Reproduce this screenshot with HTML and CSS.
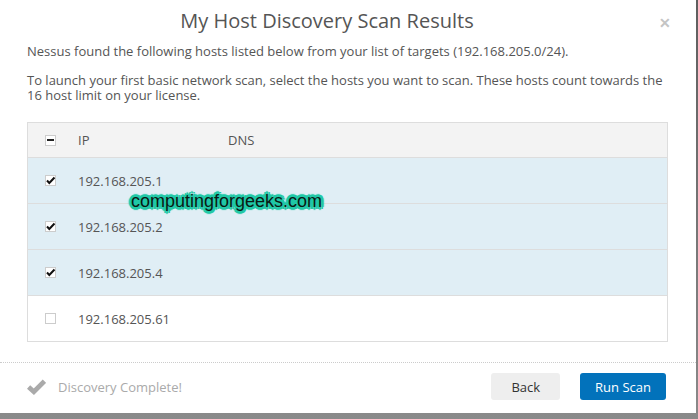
FILE: index.html
```html
<!DOCTYPE html>
<html>
  <head>
    <title>My Host Discovery Scan Results</title>
    <link rel="stylesheet" href="styles.css">
  </head>
  <body>
    <article class="modal">
      <header class="modal-header">
        <h1>My Host Discovery Scan Results</h1>
        <span class="close">&#x2715;</span>
      </header>

      <section class="modal-body">
        <p>Nessus found the following hosts listed below from your list of targets (192.168.205.0/24).</p>
        <p>To launch your first basic network scan, select the hosts you want to scan. These hosts count towards the 16 host limit on your license.</p>

        <div class="hosts">
          <div class="row row-head">
            <span class="check check-partial"><i></i></span>
            <span class="col-ip">IP</span>
            <span class="col-dns">DNS</span>
          </div>
          <div class="row selected">
            <span class="check"><svg viewBox="0 0 11 11"><path d="M2 5.5 L4.3 8 L9.5 2.5" /></svg></span>
            <span class="col-ip">192.168.205.1</span>
            <span class="col-dns"></span>
          </div>
          <div class="row selected">
            <span class="check"><svg viewBox="0 0 11 11"><path d="M2 5.5 L4.3 8 L9.5 2.5" /></svg></span>
            <span class="col-ip">192.168.205.2</span>
            <span class="col-dns"></span>
          </div>
          <div class="row selected">
            <span class="check"><svg viewBox="0 0 11 11"><path d="M2 5.5 L4.3 8 L9.5 2.5" /></svg></span>
            <span class="col-ip">192.168.205.4</span>
            <span class="col-dns"></span>
          </div>
          <div class="row">
            <span class="check"></span>
            <span class="col-ip">192.168.205.61</span>
            <span class="col-dns"></span>
          </div>
        </div>
      </section>

      <footer class="modal-footer">
        <div class="status">
          <svg viewBox="0 0 18 15"><path d="M1.5 7.5 L6.5 12 L16.5 2" /></svg>
          <span>Discovery Complete!</span>
        </div>
        <div class="actions">
          <button class="btn">Back</button>
          <button class="btn btn-primary">Run Scan</button>
        </div>
      </footer>

      <div class="watermark">computingforgeeks.com</div>
    </article>
  </body>
</html>
```

FILE: styles.css
```css
* {
  box-sizing: border-box;
}

body {
  margin: 0;
  font-family: "Open Sans", sans-serif;
  font-size: 13px;
  color: #555;
  background: linear-gradient(#5e5e5e, #8a8a8a);
  height: 419px;
  overflow: hidden;
}

.modal {
  position: relative;
  width: 696px;
  height: 413px;
  background: #fff;
  display: flex;
  flex-direction: column;
}

.modal-header {
  position: relative;
  padding: 7px 42px 0 0;
}

.modal-header h1 {
  margin: 0;
  text-align: center;
  font-size: 20px;
  line-height: 28px;
  font-weight: 400;
  color: #555;
}

.close {
  position: absolute;
  right: 25px;
  top: 13px;
  font-size: 14px;
  font-weight: bold;
  color: #c4c4c4;
}

.modal-body {
  padding: 0 28px 0 27px;
  flex-grow: 1;
}

.modal-body p {
  margin: 9px 0 0 0;
  line-height: 15px;
}

.modal-body p + p {
  margin-top: 14px;
}

.hosts {
  margin-top: 19px;
  border: 1px solid #ddd;
}

.row {
  display: flex;
  align-items: center;
  height: 46px;
  border-top: 1px solid #ddd;
  background: #fff;
}

.row.row-head {
  height: 34px;
  border-top: none;
  background: #f3f3f3;
}

.row.selected {
  background: #e0eef5;
}

.check {
  width: 11px;
  height: 11px;
  margin: 0 22px 0 17px;
  border: 1px solid #ccc;
  background: #fff;
  display: flex;
  align-items: center;
  justify-content: center;
}

.check svg {
  width: 11px;
  height: 11px;
  margin: -1px;
}

.check svg path {
  fill: none;
  stroke: #111;
  stroke-width: 2;
}

.check-partial i {
  display: block;
  width: 7px;
  height: 2px;
  background: #222;
}

.col-ip {
  width: 150px;
}

.modal-footer {
  border-top: 1px dotted #ccc;
  margin-top: 20px;
  padding: 10px 30px 13px 27px;
  display: flex;
  align-items: center;
  justify-content: space-between;
}

.status {
  display: flex;
  align-items: center;
  color: #aaa;
}

.status svg {
  width: 19px;
  height: 16px;
  margin-right: 12px;
}

.status svg path {
  fill: none;
  stroke: #aaa;
  stroke-width: 4.5;
}

.actions {
  display: flex;
  gap: 20px;
}

.btn {
  font-family: "Open Sans", sans-serif;
  font-size: 13px;
  height: 27px;
  padding: 0 20px;
  border: none;
  border-radius: 3px;
  background: #eee;
  color: #333;
}

.btn.btn-primary {
  padding: 0 15px;
  background: #0272bb;
  color: #fff;
}

.watermark {
  position: absolute;
  left: 131px;
  top: 191px;
  font-family: "Liberation Sans", Arial, sans-serif;
  font-size: 18px;
  color: #0a1a14;
  text-shadow:
    2px 0 0 #1fc8a6, -2px 0 0 #1fc8a6, 0 2px 0 #1fc8a6, 0 -2px 0 #1fc8a6,
    2px 2px 0 #1fc8a6, -2px -2px 0 #1fc8a6, 2px -2px 0 #1fc8a6, -2px 2px 0 #1fc8a6,
    3px 0 1px #1fc8a6, -3px 0 1px #1fc8a6, 0 3px 1px #1fc8a6, 0 -3px 1px #1fc8a6;
}
```
